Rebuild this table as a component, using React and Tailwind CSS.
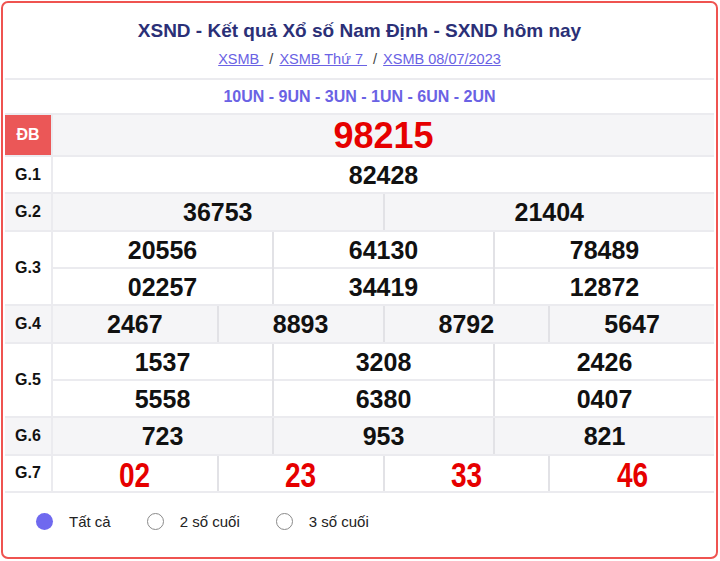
import React from "react";

const LINE = "border-[#ebebef]";

function Label({ children, red }) {
  return (
    <div
      className={
        red
          ? "w-[48px] shrink-0 flex items-center justify-center bg-[#eb5757] text-white font-bold text-[16px] border-r-2 border-[#ebebef]"
          : "w-[48px] shrink-0 flex items-center justify-center text-[#111] font-bold text-[16px] border-r-2 border-[#ebebef]"
      }
    >
      {children}
    </div>
  );
}

function Num({ children, red }) {
  if (red) {
    return (
      <span className="inline-block scale-x-[0.8] text-[35px] leading-none font-bold text-[#e60000]">
        {children}
      </span>
    );
  }
  return <span className="text-[25px] leading-none font-bold text-[#111]">{children}</span>;
}

function SingleRow({ label, nums, bg, red }) {
  return (
    <div className={`flex border-b-2 ${LINE} ${bg}`}>
      <Label>{label}</Label>
      <div className="flex-1 flex">
        {nums.map((n, i) => (
          <div
            key={i}
            className={
              i === 0
                ? "flex-1 h-[35.33px] pt-[2px] flex items-center justify-center"
                : "flex-1 h-[35.33px] pt-[2px] flex items-center justify-center border-l-2 border-[#e2e2e6]"
            }
          >
            <Num red={red}>{n}</Num>
          </div>
        ))}
      </div>
    </div>
  );
}

function DoubleRow({ label, cols, bg }) {
  return (
    <div className={`flex border-b-2 ${LINE} ${bg}`}>
      <Label>{label}</Label>
      <div className="flex-1 flex">
        {cols.map((c, i) => (
          <div
            key={i}
            className={
              i === 0
                ? "flex-1 flex flex-col"
                : "flex-1 flex flex-col border-l-2 border-[#e2e2e6]"
            }
          >
            <div className="h-[37.33px] pt-[2px] flex items-center justify-center border-b-2 border-[#ebebef]">
              <Num>{c[0]}</Num>
            </div>
            <div className="h-[35.33px] pt-[2px] flex items-center justify-center">
              <Num>{c[1]}</Num>
            </div>
          </div>
        ))}
      </div>
    </div>
  );
}

function Radio({ checked, label }) {
  return (
    <div className="flex items-center">
      {checked ? (
        <span className="w-[17px] h-[17px] rounded-full bg-[#6f69ef]" />
      ) : (
        <span className="w-[17px] h-[17px] rounded-full border border-[#8a8a8a] bg-white" />
      )}
      <span className="ml-[16px] text-[15px] text-[#222]">{label}</span>
    </div>
  );
}

export default function App() {
  return (
    <div
      className="w-[720px] h-[561px] bg-white pt-[1px] pl-[1px]"
      style={{ fontFamily: '"Liberation Sans", Arial, sans-serif' }}
    >
      <div className="w-[717px] h-[558px] border-2 border-[#ef5350] rounded-[7px] px-[2px] flex flex-col overflow-hidden">
        <div className={`h-[77px] shrink-0 flex flex-col items-center border-b-2 ${LINE}`}>
          <div className="mt-[16px] h-[24px] leading-[24px] text-[19px] font-bold text-[#2b3077]">
            XSND - Kết quả Xổ số Nam Định - SXND hôm nay
          </div>
          <div className="mt-[6px] h-[20px] leading-[20px] text-[14.5px] text-[#444] whitespace-pre">
            <span className="underline text-[#6a62e4]">XSMB </span>
            <span className="mx-[2px]"> / </span>
            <span className="underline text-[#6a62e4]">XSMB Thứ 7 </span>
            <span className="mx-[2px]"> / </span>
            <span className="underline text-[#6a62e4]">XSMB 08/07/2023</span>
          </div>
        </div>
        <div className={`h-[35px] shrink-0 flex items-center justify-center border-b-2 ${LINE} text-[16px] font-bold text-[#6a62e4]`}>
          10UN - 9UN - 3UN - 1UN - 6UN - 2UN
        </div>

        <div className={`flex shrink-0 border-b-2 ${LINE} bg-[#f5f5f7]`}>
          <Label red>ĐB</Label>
          <div className="flex-1 h-[40px] pt-[2px] flex items-center justify-center">
            <span className="text-[36px] leading-none font-bold text-[#e60000]">98215</span>
          </div>
        </div>
        <SingleRow label="G.1" nums={["82428"]} bg="bg-white" />
        <SingleRow label="G.2" nums={["36753", "21404"]} bg="bg-[#f5f5f7]" />
        <DoubleRow
          label="G.3"
          cols={[
            ["20556", "02257"],
            ["64130", "34419"],
            ["78489", "12872"],
          ]}
          bg="bg-white"
        />
        <SingleRow label="G.4" nums={["2467", "8893", "8792", "5647"]} bg="bg-[#f5f5f7]" />
        <DoubleRow
          label="G.5"
          cols={[
            ["1537", "5558"],
            ["3208", "6380"],
            ["2426", "0407"],
          ]}
          bg="bg-white"
        />
        <SingleRow label="G.6" nums={["723", "953", "821"]} bg="bg-[#f5f5f7]" />
        <SingleRow label="G.7" nums={["02", "23", "33", "46"]} bg="bg-white" red />

        <div className="h-[58px] shrink-0 flex items-center gap-[36px] pl-[31px]">
          <Radio checked label="Tất cả" />
          <Radio label="2 số cuối" />
          <Radio label="3 số cuối" />
        </div>
      </div>
    </div>
  );
}
